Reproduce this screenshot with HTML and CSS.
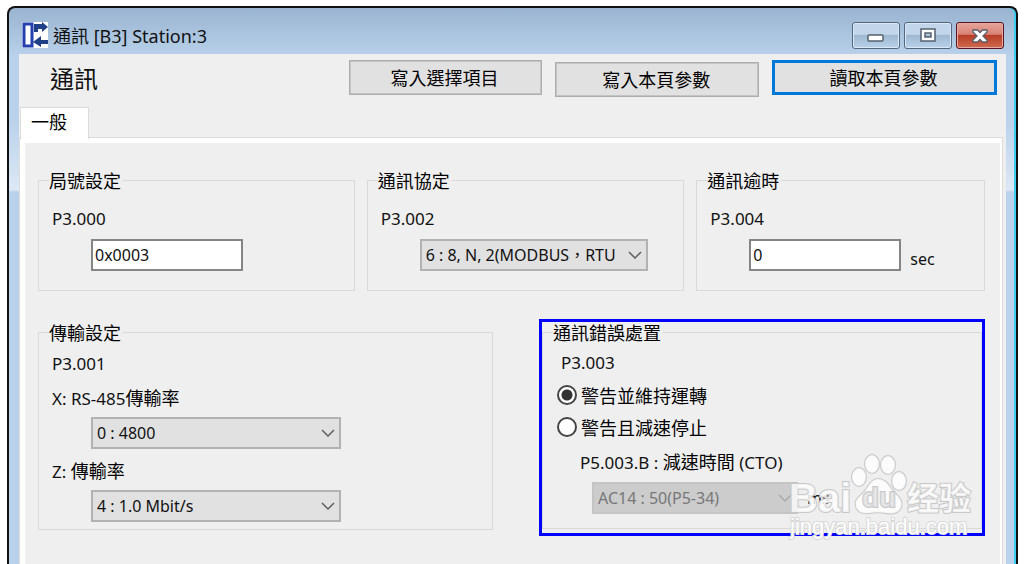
FILE: index.html
```
<!DOCTYPE html>
<html lang="zh-Hant">
<head>
  <meta charset="UTF-8" />
  <meta name="viewport" content="width=device-width, initial-scale=1.0"/>
  <title>通訊 [B3] Station:3</title>
  <link rel="stylesheet" href="styles.css">
</head>
<body>
  <div class="window">
    <div class="titlebar">
      <svg class="app-icon" width="26" height="26" viewBox="0 0 26 26">
        <rect x="0" y="0" width="26" height="26" fill="#fff"/>
        <rect x="2" y="2" width="8" height="22" fill="#fff" stroke="#2440b0" stroke-width="3"/>
        <path d="M12 2h8V0l6 5-6 5V7h-4v3h-4zM26 18h-7v-4l-8 6 8 5v-3h7z" fill="#1f3f86"/>
      </svg>
      <div class="caption">通訊 [B3] Station:3</div>
      <div class="window-buttons">
        <button class="win-btn" aria-label="Minimize">
          <svg width="18" height="14" viewBox="0 0 18 14"><rect x="1" y="6" width="15" height="6" rx="1" fill="#fff" stroke="#56606f" stroke-width="1.500"/></svg>
        </button>
        <button class="win-btn" aria-label="Maximize">
          <svg width="18" height="16" viewBox="0 0 18 16"><path d="M2 1h14v12H2zM6 5v4h6V5z" fill="#fff" fill-rule="evenodd" stroke="#56606f" stroke-width="1.500"/></svg>
        </button>
        <button class="win-btn close" aria-label="Close">
          <svg width="18" height="14" viewBox="0 0 18 14"><path d="M2 1h4.500L9 3.500 11.500 1H16v2l-4 4 4 4v2h-4.500L9 10.500 6.500 13H2v-2l4-4-4-4z" fill="#fff" stroke="#59606e" stroke-width="1.300"/></svg>
        </button>
      </div>
    </div>

    <div class="content">
      <div class="header">
        <h1>通訊</h1>
        <button class="action">寫入選擇項目</button>
        <button class="action low">寫入本頁參數</button>
        <button class="action active">讀取本頁參數</button>
      </div>

      <div class="tabs">
        <button class="tab">一般</button>
      </div>

      <div class="panel">
        <div class="row top-row">
          <fieldset class="group">
            <legend>局號設定</legend>
            <label for="station">P3.000</label>
            <div class="field"><input type="text" id="station" value="0x0003"></div>
          </fieldset>

          <fieldset class="group">
            <legend>通訊協定</legend>
            <label for="protocol">P3.002</label>
            <div class="field">
              <div class="select medium">
                <select id="protocol"><option>6 : 8, N, 2(MODBUS，RTU</option></select>
                <svg class="arrow" width="14" height="8" viewBox="0 0 14 8"><path d="M1 1l6 6 6-6"/></svg>
              </div>
            </div>
          </fieldset>

          <fieldset class="group">
            <legend>通訊逾時</legend>
            <label for="timeout">P3.004</label>
            <div class="field"><input type="text" id="timeout" value="0"><span class="unit">sec</span></div>
          </fieldset>
        </div>

        <div class="row bottom-row">
          <fieldset class="group rates">
            <legend>傳輸設定</legend>
            <div class="line">P3.001</div>
            <label for="rate-x">X: RS-485<span class="zh">傳輸率</span></label>
            <div class="field">
              <div class="select wide">
                <select id="rate-x"><option>0 : 4800</option></select>
                <svg class="arrow" width="14" height="8" viewBox="0 0 14 8"><path d="M1 1l6 6 6-6"/></svg>
              </div>
            </div>
            <label for="rate-z">Z: <span class="zh">傳輸率</span></label>
            <div class="field">
              <div class="select wide">
                <select id="rate-z"><option>4 : 1.0 Mbit/s</option></select>
                <svg class="arrow" width="14" height="8" viewBox="0 0 14 8"><path d="M1 1l6 6 6-6"/></svg>
              </div>
            </div>
          </fieldset>

          <div class="highlight">
            <fieldset class="group errors">
              <legend>通訊錯誤處置</legend>
              <div class="line code">P3.003</div>
              <label class="radio"><input type="radio" name="error" checked>警告並維持運轉</label>
              <label class="radio"><input type="radio" name="error">警告且減速停止</label>
              <label class="sub" for="decel">P5.003.B : <span class="zh">減速時間</span> (CTO)</label>
              <div class="field">
                <div class="select small">
                  <select id="decel" disabled><option>AC14 : 50(P5-34)</option></select>
                  <svg class="arrow" width="14" height="8" viewBox="0 0 14 8"><path d="M1 1l6 6 6-6"/></svg>
                </div>
                <span class="unit">ms</span>
              </div>
            </fieldset>

            <svg class="watermark" width="190" height="92" viewBox="0 0 190 92">
              <text class="mark" x="2" y="61" font-size="40">Bai</text>
              <ellipse cx="72" cy="26" rx="7" ry="9"/>
              <ellipse cx="85" cy="13" rx="7" ry="9"/>
              <ellipse cx="101" cy="14" rx="7" ry="9"/>
              <ellipse cx="112" cy="30" rx="7" ry="9"/>
              <path d="M91 28c8 0 11 7 16 13 5 5 9 9 7 15-2 7-10 7-15 6-6-1-11-1-16 0-5 1-12 0-14-6-2-7 3-10 8-15 5-6 7-13 14-13z"/>
              <text class="du" x="75" y="56" font-size="28">du</text>
              <text class="cjk" x="120" y="59" font-size="32">经验</text>
              <text class="url" x="3" y="83" font-size="22">jingyan.baidu.com</text>
            </svg>
          </div>
        </div>
      </div>
    </div>
  </div>
</body>
</html>
```

FILE: styles.css
```
* {
  box-sizing: border-box;
}

body {
  margin: 0;
  padding: 6px 9px 0 7px;
  background: #fff;
  color: #111;
  font-family: "Noto Sans", "Noto Sans CJK TC", sans-serif;
  font-size: 17px;
  line-height: 24px;
  overflow: hidden;
}

button, input, select {
  font: inherit;
  color: inherit;
}

input, select {
  font-size: 16px;
}

.zh, legend, .action, .tab, .radio {
  font-family: "Noto Sans CJK TC", sans-serif;
  font-size: 18px;
  color: #000;
}

.window {
  min-height: calc(100vh - 6px);
  display: flex;
  flex-direction: column;
  padding: 0 10px;
  background: linear-gradient(#99b4d1 0, #b9d1ea 48px, #b9d1ea 110px, #dce8f5 182px, #b9d1ea 184px);
  border: 2px solid #111;
  border-bottom: none;
  border-radius: 8px 8px 0 0;
  box-shadow: inset -2px 0 #3ccdf0;
}

.titlebar {
  height: 46px;
  display: flex;
  align-items: flex-start;
  padding: 14px 2px 0 3px;
}

.caption {
  flex: 1;
  margin-left: 5px;
  font-size: 18px;
  line-height: 28px;
}

.window-buttons {
  display: flex;
  gap: 4px;
}

.win-btn {
  width: 48px;
  height: 27px;
  padding: 0;
  display: flex;
  align-items: center;
  justify-content: center;
  background: linear-gradient(#c3d5e8 45%, #9fb9d3 50%, #b9d1ea);
  border: 1px solid #53667f;
  border-radius: 3px;
  box-shadow: inset 0 0 0 1px #dbe8f5;
}

.win-btn.close {
  background: linear-gradient(#e5a59b 0, #d98274 45%, #b83d26 50%, #cf6a50);
  border-color: #5a1420;
  box-shadow: inset 0 0 0 1px #e6aca2;
}

.content {
  flex: 1;
  display: flex;
  flex-direction: column;
  padding: 0 4px 0 0;
  background: #efefef;
}

.header {
  display: grid;
  grid-template-columns: 317fr 194fr 204fr 225fr;
  gap: 13px;
  align-items: start;
  padding: 6px 5px 0 0;
}

h1 {
  margin: 0;
  padding-left: 31px;
  font-family: "Noto Sans CJK TC", sans-serif;
  font-size: 24px;
  line-height: 36px;
  font-weight: normal;
}

.action {
  height: 35px;
  padding: 0 2px 2px 0;
  background: #e1e1e1;
  border: 1px solid #adadad;
  box-shadow: inset 0 0 0 1px #c4c4c4;
}

.action.low {
  margin-top: 2px;
}

.action.active {
  border: 3px solid #0078d7;
  box-shadow: none;
}

.tabs {
  display: flex;
  padding-left: 1px;
  margin-top: 10px;
}

.tab {
  width: 69px;
  height: 32px;
  padding: 0 0 6px 10px;
  text-align: left;
  background: #fff;
  border: 1px solid #dcdcdc;
  border-bottom: none;
  position: relative;
  z-index: 1;
}

.panel {
  flex: 1;
  margin: -1px 0 0 1px;
  padding: 25px 15px 0 13px;
  border: solid #fff;
  border-width: 5px 2px 0 5px;
  box-shadow: 0 0 0 1px #dcdcdc;
}

.row {
  display: grid;
}

.top-row {
  grid-template-columns: 317fr 318fr 289fr;
  gap: 12px;
}

.bottom-row {
  grid-template-columns: 455fr 446fr;
  gap: 46px;
  align-items: start;
  margin-top: 28px;
}

.group {
  min-width: 0;
  margin: 0;
  padding: 15px 0 19px 13px;
  border: 1px solid #d9d9d9;
}

.group legend {
  margin-left: -3px;
  padding: 0 2px 0 0;
  line-height: 24px;
}

.group label, .line {
  display: block;
}

.field {
  display: flex;
  margin: 8px 0 0 39px;
}

.field input {
  width: 152px;
  height: 32px;
  padding: 0 2px;
  background: #fff;
  border: 2px solid #858585;
  border-radius: 0;
}

.unit {
  margin: 8px 0 0 9px;
  font-size: 16px;
}

.select {
  position: relative;
}

.select select {
  width: 100%;
  height: 32px;
  padding: 0 24px 0 4px;
  appearance: none;
  background: #e1e1e1;
  border: 2px solid #b2b2b2;
  border-radius: 0;
  display: block;
}

.select select:disabled {
  background: #ccc;
  border-color: #c4c4c4;
  color: #777;
  opacity: 1;
}

.arrow {
  position: absolute;
  right: 6px;
  top: 12px;
  pointer-events: none;
  fill: none;
  stroke: #606060;
  stroke-width: 1.5;
}

.select select:disabled + .arrow {
  stroke: #aaa;
}

.medium {
  width: 228px;
}

.wide {
  width: 250px;
}

.small {
  width: 206px;
}

.rates {
  margin-top: 1px;
  padding: 8px 0 7px 13px;
}

.rates label {
  margin-top: 9px;
}

.rates .field {
  margin-top: 6px;
}

.highlight {
  position: relative;
  padding-bottom: 4px;
  border: 3px solid #0000ff;
}

.errors {
  padding: 9px 0 14px 14px;
}

.errors legend {
  margin-left: -4px;
  line-height: 20px;
}

.errors .code {
  padding-left: 4px;
}

.errors .radio {
  display: flex;
  align-items: center;
  margin-top: 8px;
}

.radio input {
  width: 20px;
  height: 20px;
  margin: 0 4px 0 0;
  appearance: none;
  background: #fff;
  border: 2px solid #444;
  border-radius: 50%;
}

.radio input:checked {
  background: radial-gradient(circle, #333 5px, #fff 6px);
}

.errors .sub {
  margin: 10px 0 0 23px;
}

.errors .field {
  margin: 7px 0 0 35px;
}

.errors .unit {
  margin-top: 4px;
}

.watermark {
  position: absolute;
  right: 5px;
  bottom: -10px;
  pointer-events: none;
  fill: #fff;
  fill-opacity: 0.8;
  stroke: #c8c8c8;
  stroke-width: 2;
  paint-order: stroke;
}

.mark, .du, .url {
  font-family: "Liberation Sans", sans-serif;
  font-weight: bold;
}

.du {
  fill: #e4e4e4;
}

.cjk {
  font-family: "Noto Sans CJK SC", sans-serif;
  font-weight: bold;
}

.url {
  font-weight: normal;
  fill-opacity: 1;
  stroke: #d8d8d8;
}
```
